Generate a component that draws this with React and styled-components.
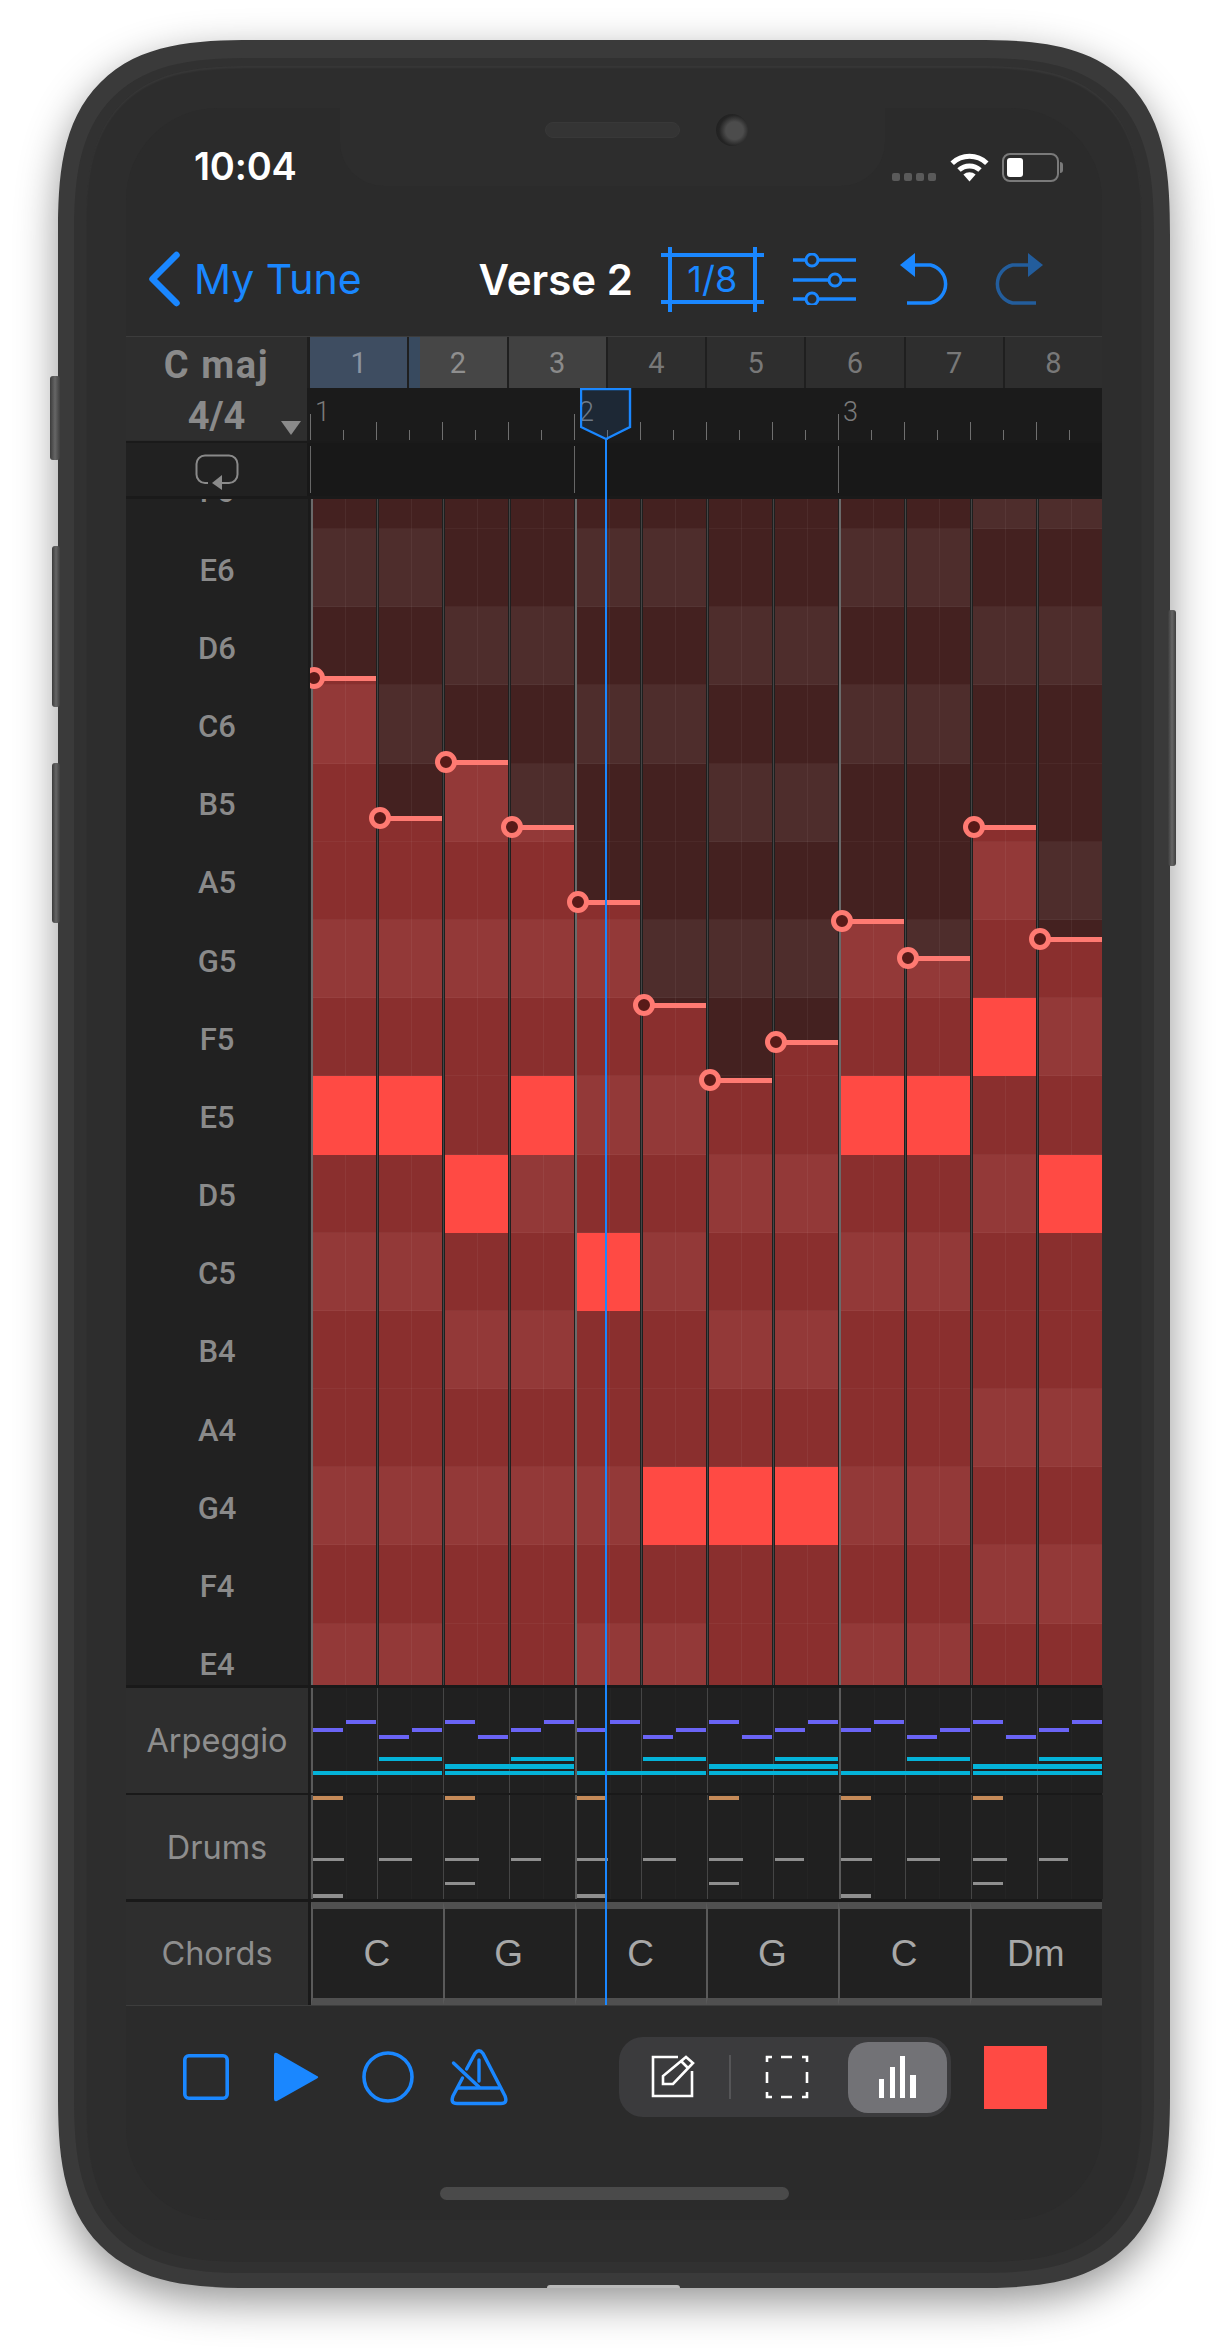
import React from "react";
import styled, { createGlobalStyle } from "styled-components";

const BLUE = "#1a87ff";
const ROW_H = 78.2;
const GRID_TOP = 498;
const FIRST_ROW_TOP = 449.8;

const NOTES = ["F", "E", "D", "C", "B", "A", "G", "F", "E", "D", "C", "B", "A", "G", "F", "E"];
const OCTAVES = [6, 6, 6, 6, 5, 5, 5, 5, 5, 5, 5, 4, 4, 4, 4, 4];
const CHORD_TONES = {
  C: ["C", "E", "G"],
  G: ["G", "B", "D"],
  Dm: ["D", "F", "A"],
};
const CHORDS = ["C", "G", "C", "G", "C", "Dm"];

// one entry per sixteenth column: active row and top of the bar
const COLUMNS = [
  { active: 8, top: 677 },
  { active: 8, top: 817 },
  { active: 9, top: 761 },
  { active: 8, top: 826 },
  { active: 10, top: 901 },
  { active: 13, top: 1004 },
  { active: 13, top: 1079 },
  { active: 13, top: 1041 },
  { active: 8, top: 920 },
  { active: 8, top: 957 },
  { active: 7, top: 826 },
  { active: 9, top: 938 },
];

const GlobalStyle = createGlobalStyle`
  html, body {
    margin: 0;
    padding: 0;
    background: #fff;
  }
  body {
    font-family: Inter, "Liberation Sans", sans-serif;
  }
`;

const Page = styled.div`
  width: 1225px;
  height: 2348px;
  padding: 40px 0 0 58px;
  box-sizing: border-box;
  overflow: hidden;
  background: #fff;
`;

const Phone = styled.div`
  position: relative;
  width: 1112px;
  height: 2248px;
  box-sizing: border-box;
  padding: 18px 16px 15px;
  border-radius: 195px;
  corner-shape: superellipse(1.5);
  background: #3a3a3a;
  box-shadow: 0 14px 42px rgba(0, 0, 0, 0.42);
`;

const SideButton = styled.div`
  position: absolute;
  top: ${(p) => p.$top}px;
  height: ${(p) => p.$height}px;
  width: ${(p) => p.$width}px;
  ${(p) => (p.$right ? "right" : "left")}: -${(p) => p.$width - 2}px;
  border-radius: 3px;
  background: linear-gradient(to right, #3b3b3b, #666 50%, #3f3f3f);
`;

const BottomDent = styled.div`
  position: absolute;
  left: 489px;
  bottom: 0;
  width: 133px;
  height: 3px;
  border-radius: 6px 6px 0 0;
  background: #b9b9b9;
`;

const Frame = styled.div`
  height: 100%;
  box-sizing: border-box;
  padding: 8px 12px 11px;
  border-radius: 180px;
  corner-shape: superellipse(1.5);
  background: #313131;
`;

const Bezel = styled.div`
  height: 100%;
  box-sizing: border-box;
  padding: 42px 40px 42px;
  border-radius: 168px;
  corner-shape: superellipse(1.5);
  background: #2d2d2d;
  box-shadow: inset 0 2px 2px rgba(255, 255, 255, 0.05);
`;

const Screen = styled.div`
  position: relative;
  display: flex;
  flex-direction: column;
  height: 100%;
  border-radius: 92px;
  background: #2b2b2b;
`;

const Notch = styled.div`
  position: absolute;
  top: 0;
  left: 214px;
  width: 545px;
  height: 78px;
  box-sizing: border-box;
  display: flex;
  align-items: flex-start;
  padding: 6px 0 0 205px;
  border-radius: 0 0 44px 44px;
  background: #2d2d2d;
`;

const Speaker = styled.div`
  width: 135px;
  height: 16px;
  margin-top: 8px;
  border-radius: 8px;
  background: #343434;
  border: 1px solid #383838;
  box-sizing: border-box;
`;

const Camera = styled.div`
  width: 32px;
  height: 32px;
  margin-left: 36px;
  border-radius: 50%;
  background: radial-gradient(circle at 58% 52%, #4c4c4c 0 35%, #242424 62%, #1b1b1b);
`;

const StatusBar = styled.div`
  height: 100px;
  box-sizing: border-box;
  display: flex;
  justify-content: space-between;
  align-items: flex-start;
  padding: 42px 43px 0 68px;
`;

const Time = styled.div`
  font-size: 38px;
  line-height: 32px;
  font-weight: 600;
  letter-spacing: -0.2px;
  color: #fff;
`;

const StatusIcons = styled.div`
  display: flex;
  align-items: flex-end;
  margin-top: 2px;
  height: 30px;
`;

const SignalDots = styled.div`
  display: flex;
  gap: 4px;
  margin-right: 14px;
  padding-bottom: 1px;
`;

const SignalDot = styled.span`
  width: 8px;
  height: 8px;
  border-radius: 2px;
  background: #5a5a5a;
`;

const Battery = styled.div`
  position: relative;
  width: 57px;
  height: 29px;
  margin-left: 13px;
  box-sizing: border-box;
  padding: 3px;
  border: 2px solid #7a7a7a;
  border-radius: 8px;

  &::before {
    content: "";
    display: block;
    width: 16px;
    height: 100%;
    border-radius: 3px;
    background: #fff;
  }

  &::after {
    content: "";
    position: absolute;
    top: 7px;
    right: -6px;
    width: 3px;
    height: 11px;
    border-radius: 0 3px 3px 0;
    background: #7a7a7a;
  }
`;

const NavBar = styled.div`
  height: 128px;
  box-sizing: border-box;
  display: flex;
  align-items: center;
  padding: 14px 0 0 23px;
`;

const BackLabel = styled.div`
  width: 170px;
  margin-left: 14px;
  font-size: 41px;
  color: ${BLUE};
`;

const Title = styled.div`
  margin-left: 114.5px;
  font-size: 42px;
  font-weight: 600;
  color: #fff;
`;

const GridButton = styled.div`
  position: relative;
  width: 103px;
  height: 65px;
  margin-left: 28px;
  display: flex;
  align-items: center;
  justify-content: center;
  font-size: 36px;
  color: ${BLUE};

  svg {
    position: absolute;
    inset: 0;
  }
`;

const NavIcon = styled.div`
  display: flex;
  margin-left: ${(p) => p.$gap}px;
`;

const Editor = styled.div`
  position: relative;
  display: flex;
  flex-direction: column;
`;

const TopRow = styled.div`
  display: flex;
  height: 104px;
  border-top: 1px solid #3c3c3c;
`;

const KeyInfo = styled.div`
  position: relative;
  width: 182px;
  height: 103px;
  display: flex;
  flex-direction: column;
  align-items: center;
  padding-top: 3px;
  box-sizing: border-box;
  background: #2e2e2e;
`;

const KeyText = styled.div`
  font-family: Roboto, sans-serif;
  font-size: 38px;
  line-height: 51px;
  font-weight: 700;
  letter-spacing: ${(p) => p.$spread || 0}px;
  color: #8a8a8a;
`;

const SortCaret = styled.div`
  position: absolute;
  right: 6px;
  bottom: 5px;
  width: 0;
  height: 0;
  border-left: 10px solid transparent;
  border-right: 10px solid transparent;
  border-top: 14px solid #8a8a8a;
`;

const Timeline = styled.div`
  flex: 1;
  display: flex;
  flex-direction: column;
  background: #1b1b1b;
`;

const BarCells = styled.div`
  height: 51px;
  display: grid;
  grid-template-columns: repeat(8, 1fr);
  gap: 2px;
  padding-left: 3px;
  background: #1f1f1f;
`;

const barTones = {
  selected: { bg: "#3e4d61", color: "#8b94a1" },
  played: { bg: "#464646", color: "#8f8f8f" },
  near: { bg: "#414141", color: "#8a8a8a" },
  idle: { bg: "#2e2e2e", color: "#787878" },
};

const BarCell = styled.div`
  display: flex;
  align-items: center;
  justify-content: center;
  font-family: Roboto, sans-serif;
  font-size: 29px;
  color: ${(p) => barTones[p.$tone].color};
  background: ${(p) =>
    p.$progress
      ? `linear-gradient(to right, #384a5f ${p.$progress}px, ${barTones[p.$tone].bg} ${p.$progress}px)`
      : barTones[p.$tone].bg};
`;

const Ruler = styled.div`
  height: 52px;
  display: flex;
  align-items: flex-end;
  padding-left: 3px;
  background: #1b1b1b;
`;

const tickHeights = { bar: 26, beat: 18, sub: 10 };

const Tick = styled.div`
  position: relative;
  width: 33px;
  height: ${(p) => tickHeights[p.$kind]}px;
  box-sizing: border-box;
  border-left: 1px solid #6f6f6f;
`;

const BarNumber = styled.span`
  position: absolute;
  left: 4px;
  top: -15px;
  font-family: Roboto, sans-serif;
  font-weight: 300;
  font-size: 27px;
  line-height: 27px;
  color: #7a7a7a;
`;

const LoopRow = styled.div`
  display: flex;
  height: 58px;
  box-sizing: border-box;
  border-top: 2px solid #1a1a1a;
  border-bottom: 3px solid #1a1a1a;
`;

const LoopButton = styled.div`
  width: 182px;
  box-sizing: border-box;
  padding-top: 5px;
  display: flex;
  align-items: center;
  justify-content: center;
  background: #212121;
`;

const LoopLane = styled.div`
  flex: 1;
  display: flex;
  align-items: center;
  padding-left: 3px;
  background: #181818;
`;

const LoopBar = styled.div`
  width: 264px;
  height: 47px;
  box-sizing: border-box;
  border-left: 1px solid #666;
`;

const RollRow = styled.div`
  display: flex;
  height: 1189px;
  box-sizing: border-box;
  border-bottom: 3px solid #191919;
`;

const KeyList = styled.div`
  width: 182px;
  overflow: hidden;
  background: #212121;
`;

const KeyStack = styled.div`
  margin-top: -48.2px;
`;

const KeyLabel = styled.div`
  height: ${ROW_H}px;
  box-sizing: border-box;
  padding-top: 4px;
  display: flex;
  align-items: center;
  justify-content: center;
  font-family: Roboto, sans-serif;
  font-size: 31px;
  font-weight: 500;
  color: #8a8a8a;
`;

const LaneDivider = styled.div`
  width: 2px;
  flex: none;
  background: #1a1a1a;
`;

const Roll = styled.div`
  flex: 1;
  display: flex;
  gap: 3px;
  padding-left: 3px;
  overflow: hidden;
  background: #1f1f1f;
`;

const Column = styled.div`
  position: relative;
  width: 63px;
  flex: none;

  &::before {
    content: "";
    position: absolute;
    top: 0;
    bottom: 0;
    left: -2px;
    width: ${(p) => (p.$bar ? 2 : 1)}px;
    background: ${(p) => (p.$bar ? "#6a6a6a" : "#454545")};
  }

  &::after {
    content: "";
    position: absolute;
    top: 0;
    bottom: 0;
    left: 50%;
    width: 1px;
    background: rgba(255, 255, 255, 0.05);
  }
`;

const ColumnStack = styled.div`
  margin-top: -48.2px;
`;

const tones = {
  dim: ["#442120", "#4e2d2c"],
  lit: ["#8a2f2e", "#933938"],
};

const Cell = styled.div`
  position: ${(p) => (p.$active ? "relative" : "static")};
  z-index: ${(p) => (p.$active ? 1 : "auto")};
  height: ${ROW_H}px;
  box-shadow: ${(p) => (p.$active ? "none" : "inset 0 -1px rgba(255, 255, 255, 0.04)")};
  background: ${(p) =>
    p.$active
      ? "#ff4a44"
      : `linear-gradient(to bottom, ${tones.dim[p.$tone]} ${p.$split}%, ${tones.lit[p.$tone]} ${p.$split}%)`};
`;

const HandleBar = styled.div`
  position: absolute;
  z-index: 2;
  left: 0;
  right: 0;
  height: 5px;
  margin-top: -2.5px;
  background: #ff7a72;
`;

const HandleKnob = styled.div`
  position: absolute;
  z-index: 3;
  left: -10.5px;
  width: 22px;
  height: 22px;
  margin-top: -11px;
  box-sizing: border-box;
  border: 5px solid #ff7a72;
  border-radius: 50%;
  background: #591a18;
`;

const TrackRow = styled.div`
  display: flex;
  height: ${(p) => p.$height}px;
  box-sizing: border-box;
  border-bottom: ${(p) => p.$rule}px solid #191919;
`;

const TrackName = styled.div`
  width: 182px;
  flex: none;
  display: flex;
  align-items: center;
  justify-content: center;
  font-size: 32.5px;
  color: #8e8e8e;
  background: #2e2e2e;
`;

const Lane = styled.div`
  position: relative;
  flex: 1;
  display: flex;
  padding-left: 1px;
  background: #202020;
`;

const LaneBeat = styled.div`
  position: relative;
  width: 66px;
  flex: none;
  box-sizing: border-box;
  border-left: ${(p) => (p.$bar ? "2px solid #5a5a5a" : "1px solid #454545")};

  &::after {
    content: "";
    position: absolute;
    top: 0;
    bottom: 0;
    left: 33px;
    width: 1px;
    background: #242424;
  }
`;

const noteTones = {
  purple: "#6a64f5",
  cyan: "#04b3d9",
  orange: "#c58a58",
  gray: "#8f8f8f",
};

const LaneNote = styled.div`
  position: absolute;
  background: ${(p) => noteTones[p.$tone]};
`;

const ChordLane = styled.div`
  flex: 1;
  display: flex;
  padding-left: 1px;
  background: #1a1a1a;
`;

const ChordBlock = styled.div`
  width: 131.8px;
  flex: none;
  box-sizing: border-box;
  display: flex;
  align-items: center;
  justify-content: center;
  padding-right: 2px;
  border: 0 solid #505050;
  border-width: 7px 0;
  border-left: 2px solid #5a5a5a;
  background: #212121;
  font-family: "Liberation Sans", sans-serif;
  font-size: 37px;
  color: #a8a8a8;
`;

const Playhead = styled.div`
  position: absolute;
  left: 478.75px;
  top: 103px;
  bottom: 0;
  width: 2.5px;
  z-index: 5;
  background: ${BLUE};
`;

const PlayFlag = styled.svg`
  position: absolute;
  left: 454px;
  top: 52px;
  z-index: 6;
`;

const Toolbar = styled.div`
  flex: 1;
  display: flex;
  justify-content: space-between;
  align-items: flex-start;
  position: relative;
  box-sizing: border-box;
  padding: 31px 55px 0 34.5px;
  border-top: 1px solid #3d3d3d;
`;

const Transport = styled.div`
  display: flex;
  align-items: center;
  height: 80px;
`;

const TransportSlot = styled.div`
  width: 91px;
  display: flex;
  justify-content: center;
`;

const ToolGroup = styled.div`
  display: flex;
  align-items: center;
  gap: 33px;
`;

const Segments = styled.div`
  display: flex;
  align-items: center;
  gap: 34px;
  height: 80px;
  box-sizing: border-box;
  padding: 4px;
  padding-left: 32px;
  border-radius: 24px;
  background: #3b3b3d;
`;

const SegmentRule = styled.div`
  width: 2px;
  height: 44px;
  background: #555557;
`;

const SegmentActive = styled.div`
  width: 99px;
  height: 71px;
  margin-left: 5px;
  display: flex;
  align-items: center;
  justify-content: center;
  border-radius: 20px;
  background: #727276;
`;

const ColorSwatch = styled.div`
  width: 63px;
  height: 63px;
  background: #ff4a44;
`;

const HomeIndicator = styled.div`
  position: absolute;
  left: 314px;
  bottom: 20px;
  width: 349px;
  height: 13px;
  border-radius: 7px;
  background: #4a4a4a;
`;

const Chevron = () => (
  <svg width="31" height="56" viewBox="0 0 31 56">
    <path d="M27.5 4 L3.5 28 L27.5 52" fill="none" stroke={BLUE} strokeWidth="6.5" strokeLinecap="round" strokeLinejoin="round" />
  </svg>
);

const GridIcon = () => (
  <svg width="103" height="65" viewBox="0 0 103 65">
    <path d="M0 8 H103 M0 55 H103 M9 0 V65 M94 0 V65" stroke={BLUE} strokeWidth="4" fill="none" />
  </svg>
);

const SlidersIcon = () => (
  <svg width="63" height="52" viewBox="0 0 63 52">
    <path d="M0 7 H13 M25 7 H63 M0 27 H36 M48 27 H63 M0 46 H13 M25 46 H63" stroke={BLUE} strokeWidth="3.5" fill="none" />
    <circle cx="19" cy="7" r="6" stroke={BLUE} strokeWidth="3" fill="none" />
    <circle cx="42" cy="27" r="6" stroke={BLUE} strokeWidth="3" fill="none" />
    <circle cx="19" cy="46" r="6" stroke={BLUE} strokeWidth="3" fill="none" />
  </svg>
);

const UndoIcon = ({ color = BLUE, flip = false }) => (
  <svg width="50" height="52" viewBox="0 0 50 52" style={flip ? { transform: "scaleX(-1)" } : undefined}>
    <path d="M15 12 H30.5 A19.5 19.5 0 0 1 30.5 50 H7" stroke={color} strokeWidth="3.5" fill="none" />
    <path d="M0 12 L15 0 V24 Z" fill={color} />
  </svg>
);

const WifiIcon = () => (
  <svg width="39" height="30" viewBox="0 0 39 30">
    <path d="M2.2 11.2 A25 25 0 0 1 36.8 11.2" stroke="#fff" strokeWidth="5" fill="none" />
    <path d="M9 18 A15.5 15.5 0 0 1 30 18" stroke="#fff" strokeWidth="5" fill="none" />
    <path d="M13.4 22.6 A9 9 0 0 1 25.6 22.6 L19.5 29.5 Z" fill="#fff" />
  </svg>
);

const LoopIcon = () => (
  <svg width="44" height="37" viewBox="0 0 44 37">
    <path d="M13 29 H10 A8.5 8.5 0 0 1 1.5 20.5 V10 A8.5 8.5 0 0 1 10 1.5 H34 A8.5 8.5 0 0 1 42.5 10 V20.5 A8.5 8.5 0 0 1 34 29 H24" stroke="#8a8a8a" strokeWidth="2" fill="none" />
    <path d="M17 29 L27 21 V36 Z" fill="#8a8a8a" />
  </svg>
);

const StopIcon = () => (
  <svg width="46" height="46" viewBox="0 0 46 46">
    <rect x="1.8" y="1.8" width="42.4" height="42.4" rx="4" stroke={BLUE} strokeWidth="3.6" fill="none" />
  </svg>
);

const PlayIcon = () => (
  <svg width="46" height="54" viewBox="0 0 46 54">
    <path d="M3 3 L43 26 Q45.5 27 43 28.5 L3 51 Q0 52 0 49 V5 Q0 2 3 3 Z" fill={BLUE} />
  </svg>
);

const RecordIcon = () => (
  <svg width="52" height="52" viewBox="0 0 52 52">
    <circle cx="26" cy="26" r="24" stroke={BLUE} strokeWidth="3.6" fill="none" />
  </svg>
);

const MetronomeIcon = () => (
  <svg width="60" height="60" viewBox="0 0 60 60">
    <g stroke={BLUE} strokeWidth="3.4" fill="none" strokeLinecap="round">
      <path d="M17.6 22 L26 6.5 Q30 1 34 6.5 L56 49 Q59 56.5 52 56.5 H8 Q1 56.5 4 49 L13.5 31" />
      <path d="M9 41 H50" />
      <path d="M30 13 V34" />
      <path d="M4.5 16 L30 40" />
    </g>
  </svg>
);

const PencilIcon = () => (
  <svg width="44" height="44" viewBox="0 0 44 44">
    <g stroke="#fff" strokeWidth="2.6" fill="none">
      <path d="M27 2 H2 V41 H41 V16" />
      <path d="M12 29 V21 L35 2 L42 8 L22 29 Z" />
      <path d="M30 6 L37 13" />
    </g>
  </svg>
);

const MarqueeIcon = () => (
  <svg width="44" height="44" viewBox="0 0 44 44">
    <path
      d="M2 7 V2 H7 M16 2 H27 M37 2 H42 V7 M42 17 V28 M42 37 V42 H37 M27 42 H16 M7 42 H2 V37 M2 28 V17"
      stroke="#fff"
      strokeWidth="2.6"
      fill="none"
    />
  </svg>
);

const BarsIcon = () => (
  <svg width="38" height="42" viewBox="0 0 38 42">
    <path d="M0 23 H5 V42 H0 Z M11 11 H16 V42 H11 Z M21 0 H26 V42 H21 Z M31 19 H37 V42 H31 Z" fill="#fff" />
  </svg>
);

const arpLevels = { high: 31.5, mid: 39.5, low: 46.5 };
const arpPattern = [
  ["mid", "high"],
  ["low", "mid"],
  ["high", "low"],
  ["mid", "high"],
];

const colLeft = (i) => 3 + i * 66;

const arpNotes = () => {
  const notes = [];
  for (let i = 0; i < 12; i++) {
    const [first, second] = arpPattern[i % 4];
    notes.push({ x: colLeft(i), y: arpLevels[first], w: 29.5, h: 4, tone: "purple" });
    notes.push({ x: colLeft(i) + 33, y: arpLevels[second], w: 29.5, h: 4, tone: "purple" });
    if (i % 2 === 1) notes.push({ x: colLeft(i), y: 69, w: 62.5, h: 4, tone: "cyan" });
    if (i % 2 === 0) {
      notes.push({ x: colLeft(i), y: 83, w: 128.5, h: 4, tone: "cyan" });
      if (i % 4 === 2) notes.push({ x: colLeft(i), y: 76, w: 128.5, h: 4.5, tone: "cyan" });
    }
  }
  return notes;
};

const midHatWidths = [31, 33, 34, 30, 31, 33, 34, 29, 31, 33, 34, 29];

const drumNotes = () => {
  const notes = [];
  for (let i = 0; i < 12; i++) {
    if (i % 2 === 0) notes.push({ x: colLeft(i), y: 1, w: 29.5, h: 4, tone: "orange" });
    notes.push({ x: colLeft(i), y: 62.5, w: midHatWidths[i], h: 3, tone: "gray" });
    if (i % 4 === 2) notes.push({ x: colLeft(i), y: 87, w: 29.5, h: 3, tone: "gray" });
    if (i % 4 === 0) notes.push({ x: colLeft(i), y: 99, w: 29.5, h: 4, tone: "gray" });
  }
  return notes;
};

const rollTicks = Array.from({ length: 24 }, (_, i) => (i % 8 === 0 ? "bar" : i % 2 === 0 ? "beat" : "sub"));

const BAR_TONES = ["selected", "played", "near", "idle", "idle", "idle", "idle", "idle"];

const TrackLane = ({ notes }) => (
  <Lane>
    {Array.from({ length: 12 }, (_, i) => (
      <LaneBeat key={i} $bar={i % 4 === 0} />
    ))}
    {notes.map((n, i) => (
      <LaneNote key={i} $tone={n.tone} style={{ left: n.x, top: n.y, width: n.w, height: n.h }} />
    ))}
  </Lane>
);

const RollColumn = ({ index, active, top }) => {
  const chord = CHORD_TONES[CHORDS[Math.floor(index / 2)]];
  const y = top - GRID_TOP;

  return (
    <Column $bar={index % 4 === 0}>
      <ColumnStack>
        {NOTES.map((note, row) => {
          const rowTop = FIRST_ROW_TOP + row * ROW_H;
          const split = Math.min(100, Math.max(0, ((top - rowTop) / ROW_H) * 100));
          return <Cell key={row} $active={row === active} $tone={chord.includes(note) ? 1 : 0} $split={split} />;
        })}
      </ColumnStack>
      <HandleBar style={{ top: y }} />
      <HandleKnob style={{ top: y }} />
    </Column>
  );
};

const App = () => {
  return (
    <Page>
      <GlobalStyle />
      <Phone>
        <SideButton $top={336} $height={84} $width={10} />
        <SideButton $top={506} $height={161} $width={8} />
        <SideButton $top={723} $height={160} $width={8} />
        <SideButton $right $top={570} $height={256} $width={8} />
        <BottomDent />
        <Frame>
          <Bezel>
            <Screen>
              <Notch>
                <Speaker />
                <Camera />
              </Notch>
              <StatusBar>
                <Time>10:04</Time>
                <StatusIcons>
                  <SignalDots>
                    <SignalDot />
                    <SignalDot />
                    <SignalDot />
                    <SignalDot />
                  </SignalDots>
                  <WifiIcon />
                  <Battery />
                </StatusIcons>
              </StatusBar>
              <NavBar>
                <Chevron />
                <BackLabel>My Tune</BackLabel>
                <Title>Verse 2</Title>
                <GridButton>
                  <GridIcon />
                  <span>1/8</span>
                </GridButton>
                <NavIcon $gap={29}>
                  <SlidersIcon />
                </NavIcon>
                <NavIcon $gap={44.5}>
                  <UndoIcon />
                </NavIcon>
                <NavIcon $gap={43}>
                  <UndoIcon color="#235d9c" flip />
                </NavIcon>
              </NavBar>
              <Editor>
                <TopRow>
                  <KeyInfo>
                    <KeyText $spread={1.6}>C maj</KeyText>
                    <KeyText>4/4</KeyText>
                    <SortCaret />
                  </KeyInfo>
                  <Timeline>
                    <BarCells>
                      {BAR_TONES.map((tone, i) => (
                        <BarCell key={i} $tone={tone} $progress={i === 1 ? 11 : 0}>
                          {i + 1}
                        </BarCell>
                      ))}
                    </BarCells>
                    <Ruler>
                      {rollTicks.map((kind, i) => (
                        <Tick key={i} $kind={kind}>
                          {kind === "bar" ? <BarNumber>{i / 8 + 1}</BarNumber> : null}
                        </Tick>
                      ))}
                    </Ruler>
                  </Timeline>
                </TopRow>
                <LoopRow>
                  <LoopButton>
                    <LoopIcon />
                  </LoopButton>
                  <LoopLane>
                    <LoopBar />
                    <LoopBar />
                    <LoopBar />
                  </LoopLane>
                </LoopRow>
                <RollRow>
                  <KeyList>
                    <KeyStack>
                      {NOTES.map((note, i) => (
                        <KeyLabel key={i}>
                          {note}
                          {OCTAVES[i]}
                        </KeyLabel>
                      ))}
                    </KeyStack>
                  </KeyList>
                  <LaneDivider />
                  <Roll>
                    {COLUMNS.map((col, i) => (
                      <RollColumn key={i} index={i} active={col.active} top={col.top} />
                    ))}
                  </Roll>
                </RollRow>
                <TrackRow $height={107} $rule={2}>
                  <TrackName>Arpeggio</TrackName>
                  <LaneDivider />
                  <TrackLane notes={arpNotes()} />
                </TrackRow>
                <TrackRow $height={107} $rule={3}>
                  <TrackName>Drums</TrackName>
                  <LaneDivider />
                  <TrackLane notes={drumNotes()} />
                </TrackRow>
                <TrackRow $height={103} $rule={0}>
                  <TrackName>Chords</TrackName>
                  <LaneDivider />
                  <ChordLane>
                    {CHORDS.map((chord, i) => (
                      <ChordBlock key={i}>{chord}</ChordBlock>
                    ))}
                  </ChordLane>
                </TrackRow>
                <PlayFlag width="52" height="53" viewBox="0 0 52 53">
                  <path d="M1 1 H50 V39 L26 51 L1 39 Z" fill="rgba(40, 120, 210, 0.14)" stroke={BLUE} strokeWidth="2.4" />
                </PlayFlag>
                <Playhead />
              </Editor>
              <Toolbar>
                <Transport>
                  <TransportSlot>
                    <StopIcon />
                  </TransportSlot>
                  <TransportSlot>
                    <PlayIcon />
                  </TransportSlot>
                  <TransportSlot>
                    <RecordIcon />
                  </TransportSlot>
                  <TransportSlot>
                    <MetronomeIcon />
                  </TransportSlot>
                </Transport>
                <ToolGroup>
                  <Segments>
                    <PencilIcon />
                    <SegmentRule />
                    <MarqueeIcon />
                    <SegmentActive>
                      <BarsIcon />
                    </SegmentActive>
                  </Segments>
                  <ColorSwatch />
                </ToolGroup>
                <HomeIndicator />
              </Toolbar>
            </Screen>
          </Bezel>
        </Frame>
      </Phone>
    </Page>
  );
};

export default App;
